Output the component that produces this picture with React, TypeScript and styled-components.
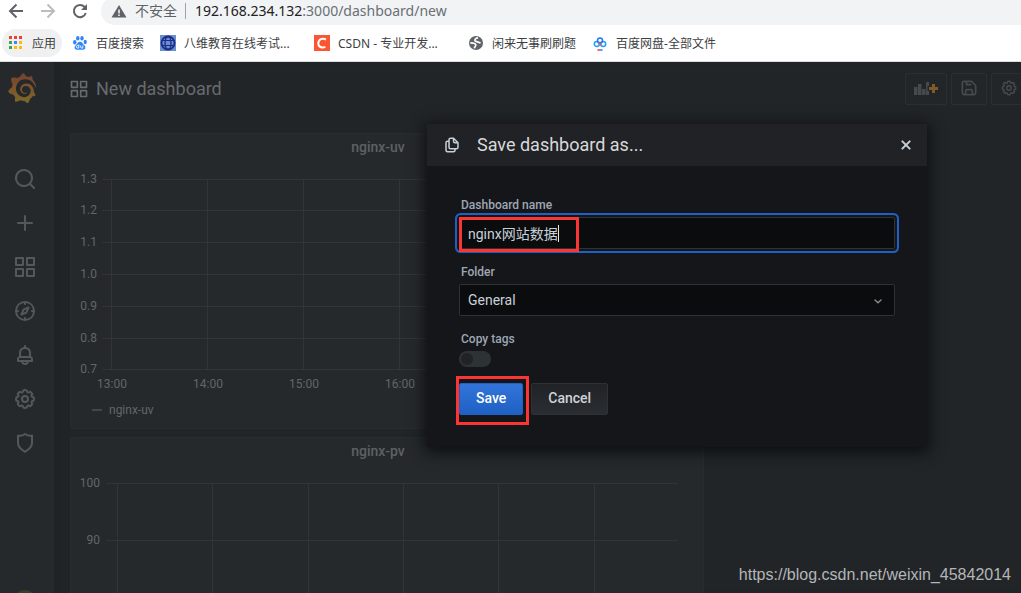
import React, { useState } from "react";
import styled, { createGlobalStyle } from "styled-components";
import { SiGrafana } from "react-icons/si";

const GlobalStyle = createGlobalStyle`
  * { box-sizing: border-box; }
  body {
    margin: 0;
    overflow: hidden;
    background: #212528;
    font-family: Roboto, "Noto Sans CJK SC", sans-serif;
  }
  button, input, select { font-family: inherit; }
`;

const Page = styled.div`
  display: flex;
  flex-direction: column;
  height: 100vh;
`;

/* Browser chrome */

const Chrome = styled.header`
  flex: none;
  background: #fff;
  border-bottom: 1px solid #dadce0;
  font-family: "Noto Sans", "Noto Sans CJK SC", sans-serif;
  overflow: hidden;
`;

const AddressRow = styled.div`
  display: flex;
  align-items: center;
  height: 28px;
  margin-top: -3px;
`;

const ChromeButtons = styled.div`
  display: flex;
  gap: 14px;
  padding: 0 12px 0 7px;
`;

const ChromeButton = styled.button`
  display: flex;
  padding: 0;
  border: 0;
  background: none;
  color: ${(p: { $faded?: boolean }) => (p.$faded ? "#babcbe" : "#5f6368")};
`;

const AddressBar = styled.div`
  display: flex;
  flex: 1;
  align-items: center;
  height: 28px;
  margin-right: -20px;
  padding: 0 0 1px 10px;
  border-radius: 14px;
  background: #f1f3f4;
  color: #5f6368;
  font-size: 14px;
  white-space: nowrap;
`;

const Insecure = styled.span`
  margin-left: 8px;
  padding-right: 8px;
  border-right: 1px solid #a0a3a7;
  line-height: 16px;
`;

const Url = styled.div`
  margin-left: 9px;
  font-size: 14px;
  line-height: 20px;
  color: #6b6f74;
  outline: 0;
  strong { font-weight: 400; color: #202124; }
`;

const Bookmarks = styled.nav`
  display: flex;
  align-items: center;
  gap: 16px;
  height: 36px;
  padding-left: 2px;
`;

const Bookmark = styled.a`
  display: flex;
  align-items: center;
  gap: 8px;
  height: 28px;
  color: #3c4043;
  font-size: 12px;
  line-height: 16px;
  text-decoration: none;
  white-space: nowrap;
  svg { flex: none; }
`;

const AppsBookmark = styled(Bookmark)`
  margin-right: -6px;
  padding: 0 6px;
  border-radius: 14px;
  background: #f0f0f0;
`;

const BookmarkText = styled.span<{ $long?: boolean }>`
  width: ${(p) => (p.$long ? "114px" : "auto")};
  padding-top: 2px;
`;

/* Dashboard */

const Shell = styled.div`
  display: flex;
  flex: 1;
  min-height: 0;
  overflow: hidden;
`;

const Sidebar = styled.nav`
  display: flex;
  flex: none;
  flex-direction: column;
  align-items: center;
  width: 54px;
  padding: 11px 4px 0 0;
  background: #25292c;
`;

const LogoLink = styled.a`
  display: flex;
  margin: 0 6px 64px 0;
`;

const NavLinks = styled.div`
  display: flex;
  flex-direction: column;
  gap: 20px;
`;

const NavLink = styled.a`
  display: flex;
  color: #53585d;
`;

const Avatar = styled.div`
  flex: none;
  width: 24px;
  height: 24px;
  margin: auto 0 -21px;
  border-radius: 50%;
  background: #344029;
`;

const Main = styled.main`
  flex: 1;
  min-width: 0;
  padding: 11px 0 0 16px;
  background: #212528;
  box-shadow: inset 12px 0 12px -10px #1e2225;
`;

const Header = styled.div`
  display: flex;
  align-items: center;
  margin: 0 -6px 28px 0;
`;

const Title = styled.h1`
  display: flex;
  flex: 1;
  align-items: center;
  gap: 7px;
  margin: 0 0 0 -1px;
  color: #676b6f;
  font-size: 18px;
  font-weight: 400;
  line-height: 24px;
`;

const Tools = styled.div`
  display: flex;
  gap: 4px;
`;

const ToolButton = styled.button<{ $wide?: boolean }>`
  display: flex;
  align-items: center;
  justify-content: center;
  width: ${(p) => (p.$wide ? "42px" : "36px")};
  height: 32px;
  padding: 0 0 2px;
  border: 1px solid #2b2f32;
  border-radius: 2px;
  background: #222629;
  color: #46494d;
`;

const Grid = styled.div`
  display: grid;
  grid-template-columns: 2fr 1fr;
  gap: 8px 0;
`;

const Panel = styled.section`
  grid-column: 1;
  height: 296px;
  padding-top: 3px;
  border: 1px solid #292c30;
  border-radius: 3px;
  background: #25292c;
`;

const PanelTitle = styled.h2`
  margin: 0;
  padding-right: 18px;
  color: #5d6165;
  font-size: 14px;
  font-weight: 500;
  line-height: 20px;
  text-align: center;
`;

const Plot = styled.svg`
  display: block;
  width: 100%;
  height: 245px;
  fill: #62666a;
  font-size: 12px;
  line { stroke: #313538; }
`;

const Legend = styled.div`
  display: flex;
  align-items: center;
  gap: 7px;
  padding-left: 21px;
  color: #62666a;
  font-size: 12px;
  line-height: 16px;
`;

const LegendMark = styled.span`
  width: 10px;
  height: 2px;
  background: #3c4c40;
`;

/* Modal */

const Modal = styled.div`
  position: absolute;
  top: 124px;
  right: 94px;
  width: 500px;
  background: #141619;
  box-shadow: 0 3px 14px 2px #0c0e0f;
`;

const ModalHeader = styled.div`
  display: flex;
  align-items: center;
  height: 42px;
  padding: 0 13px 0 16px;
  background: #202226;
  color: #c7d0d9;
`;

const ModalTitle = styled.h2`
  flex: 1;
  margin: 0 0 0 16px;
  color: #d8d9da;
  font-size: 18px;
  font-weight: 400;
  line-height: 24px;
`;

const CloseButton = styled.button`
  display: flex;
  padding: 0;
  border: 0;
  background: none;
  color: #c7d0d9;
`;

const Form = styled.form`
  display: flex;
  flex-direction: column;
  gap: 16px;
  padding: 32px;
`;

const Field = styled.div`
  position: relative;
`;

const Label = styled.label`
  display: block;
  margin-bottom: 4px;
  padding-left: 2px;
  color: #9fa7b3;
  font-size: 12px;
  font-weight: 500;
  line-height: 15px;
`;

const TextInput = styled.input`
  display: block;
  width: 100%;
  height: 32px;
  padding: 0 8px;
  border: 1px solid #2c3235;
  border-radius: 2px;
  outline: 0;
  background: #0b0c0e;
  box-shadow: 0 0 0 2px #141619, 0 0 0 4px #1f60c4;
  color: #c7d0d9;
  font-size: 14px;
`;

const Caret = styled.span`
  position: absolute;
  top: 27px;
  left: 99px;
  width: 1px;
  height: 17px;
  background: #e4e8ec;
`;

const Select = styled.select`
  display: block;
  width: 100%;
  height: 32px;
  padding: 0 8px;
  border: 1px solid #2c3235;
  border-radius: 2px;
  appearance: none;
  background: #0b0c0e;
  color: #c7d0d9;
  font-size: 14px;
`;

const Chevron = styled.svg`
  position: absolute;
  right: 9px;
  bottom: 7px;
  pointer-events: none;
`;

const Switch = styled.input`
  display: block;
  width: 32px;
  height: 16px;
  margin: 0;
  border-radius: 8px;
  appearance: none;
  background: #2c3235;
  &::before {
    content: "";
    display: block;
    width: 12px;
    height: 12px;
    margin: 2px;
    border-radius: 50%;
    background: #202226;
  }
`;

const Actions = styled.div`
  position: relative;
  display: flex;
  gap: 8px;
`;

const ActionButton = styled.button<{ $primary?: boolean }>`
  height: 32px;
  padding: 0 16px 2px;
  border: 1px solid ${(p) => (p.$primary ? "#1f60c4" : "#2c3235")};
  border-radius: 2px;
  background: ${(p) =>
    p.$primary
      ? "linear-gradient(180deg, #3274d9, #1f60c4)"
      : "linear-gradient(180deg, #202226, #2a2e32)"};
  color: ${(p) => (p.$primary ? "#fff" : "#d0d3d8")};
  font-size: 14px;
  font-weight: 500;
`;

const Highlight = styled.span<{ $around: "name" | "save" }>`
  position: absolute;
  top: ${(p) => (p.$around === "name" ? "19px" : "-7px")};
  left: ${(p) => (p.$around === "name" ? "0" : "-3px")};
  width: ${(p) => (p.$around === "name" ? "120px" : "73px")};
  height: ${(p) => (p.$around === "name" ? "35px" : "49px")};
  border: 3px solid #fa3534;
  pointer-events: none;
`;

const Watermark = styled.div`
  position: absolute;
  right: 10px;
  bottom: 8px;
  color: #b4b6b7;
  font-family: "Liberation Sans", sans-serif;
  font-size: 16px;
  line-height: 20px;
`;

const gearPath = (() => {
  const point = (turn: number, radius: number) => {
    const angle = (turn * Math.PI) / 180;
    return `${(12 + radius * Math.sin(angle)).toFixed(2)} ${(12 - radius * Math.cos(angle)).toFixed(2)}`;
  };
  let d = `M${point(-11, 8.8)}`;
  for (let i = 0; i < 8; i++) {
    const turn = i * 45;
    d += `Q${point(turn, 9.4)} ${point(turn + 11, 8.8)}`;
    d += `Q${point(turn + 22.5, 5.6)} ${point(turn + 34, 8.8)}`;
  }
  return `${d}Z`;
})();

const glyphs = {
  search:
    "M21.71,20.29,18,16.61A9,9,0,1,0,16.61,18l3.68,3.68a1,1,0,0,0,1.42,0A1,1,0,0,0,21.71,20.29ZM11,18a7,7,0,1,1,7-7A7,7,0,0,1,11,18Z",
  plus: "M19,11H13V5a1,1,0,0,0-2,0v6H5a1,1,0,0,0,0,2h6v6a1,1,0,0,0,2,0V13h6a1,1,0,0,0,0-2Z",
  apps: "M10,13H3a1,1,0,0,0-1,1v7a1,1,0,0,0,1,1h7a1,1,0,0,0,1-1V14A1,1,0,0,0,10,13ZM9,20H4V15H9ZM21,2H14a1,1,0,0,0-1,1v7a1,1,0,0,0,1,1h7a1,1,0,0,0,1-1V3A1,1,0,0,0,21,2ZM20,9H15V4h5Zm1,4H14a1,1,0,0,0-1,1v7a1,1,0,0,0,1,1h7a1,1,0,0,0,1-1V14A1,1,0,0,0,21,13Zm-1,7H15V15h5ZM10,2H3A1,1,0,0,0,2,3v7a1,1,0,0,0,1,1h7a1,1,0,0,0,1-1V3A1,1,0,0,0,10,2ZM9,9H4V4H9Z",
  compass:
    "M12,2A10,10,0,1,0,22,12,10,10,0,0,0,12,2Zm1,17.93V19a1,1,0,0,0-2,0v.93A8,8,0,0,1,4.07,13H5a1,1,0,0,0,0-2H4.07A8,8,0,0,1,11,4.07V5a1,1,0,0,0,2,0V4.07A8,8,0,0,1,19.93,11H19a1,1,0,0,0,0,2h.93A8,8,0,0,1,13,19.93ZM15.14,7.55l-5,2.12a1,1,0,0,0-.52.52l-2.12,5a1,1,0,0,0,.21,1.1,1,1,0,0,0,.7.29.93.93,0,0,0,.4-.08l5-2.12a1,1,0,0,0,.52-.52l2.12-5a1,1,0,0,0-1.31-1.31Zm-2.49,5.1-2.28,1,1-2.28,2.28-1Z",
  bell: "M18,13.18V10a6,6,0,0,0-5-5.91V3a1,1,0,0,0-2,0V4.09A6,6,0,0,0,6,10v3.18A3,3,0,0,0,4,16v2a1,1,0,0,0,1,1H8.14a4,4,0,0,0,7.72,0H19a1,1,0,0,0,1-1V16A3,3,0,0,0,18,13.18ZM8,10a4,4,0,0,1,8,0v3H8Zm4,10a2,2,0,0,1-1.72-1h3.44A2,2,0,0,1,12,20Zm6-3H6V16a1,1,0,0,1,1-1H17a1,1,0,0,1,1,1Z",
  copy: "M21,8.94a1.31,1.31,0,0,0-.06-.27l0-.09a1.07,1.07,0,0,0-.19-.28h0l-6-6h0a1.07,1.07,0,0,0-.28-.19.32.32,0,0,0-.09,0A.88.88,0,0,0,14.05,2H10A3,3,0,0,0,7,5V6H6A3,3,0,0,0,3,9V19a3,3,0,0,0,3,3h8a3,3,0,0,0,3-3V18h1a3,3,0,0,0,3-3V9S21,9,21,8.94ZM15,5.41,17.59,8H16a1,1,0,0,1-1-1ZM15,19a1,1,0,0,1-1,1H6a1,1,0,0,1-1-1V9A1,1,0,0,1,6,8H7v7a3,3,0,0,0,3,3h5Zm4-4a1,1,0,0,1-1,1H10a1,1,0,0,1-1-1V5a1,1,0,0,1,1-1h3V7a3,3,0,0,0,3,3h3Z",
};

const strokes = {
  shield:
    "M12 3C9.600 4.800 7.200 5.200 5 4.600V12c0 3.600 2.600 6.200 7 8.800 4.400-2.600 7-5.200 7-8.800V4.600C16.800 5.200 14.400 4.800 12 3Z",
  save: "M6 4H15L20 9V17A3 3 0 0 1 17 20H7A3 3 0 0 1 4 17V6A2 2 0 0 1 6 4ZM9 4.500V8H14M8 20V15.500A1.500 1.500 0 0 1 9.500 14H14.500A1.500 1.500 0 0 1 16 15.500V20",
  close: "M6.500 6.500L17.500 17.500M17.500 6.500L6.500 17.500",
};

const Glyph = ({ name, size = 24 }: { name: keyof typeof glyphs; size?: number }) => (
  <svg width={size} height={size} viewBox="0 0 24 24" fill="currentColor" aria-hidden="true">
    <path d={glyphs[name]} />
  </svg>
);

const Stroke = ({ name, size = 24, weight = 2 }: { name: keyof typeof strokes; size?: number; weight?: number }) => (
  <svg width={size} height={size} viewBox="0 0 24 24" fill="none" stroke="currentColor" strokeWidth={weight} strokeLinejoin="round" strokeLinecap="round" aria-hidden="true">
    <path d={strokes[name]} />
  </svg>
);

const Gear = ({ size = 24 }: { size?: number }) => (
  <svg width={size} height={size} viewBox="0 0 24 24" fill="none" stroke="currentColor" strokeWidth={2} strokeLinejoin="round" aria-hidden="true">
    <path d={gearPath} />
    <circle cx="12" cy="12" r="3" />
  </svg>
);

const navItems = [
  { label: "Search", icon: <Glyph name="search" /> },
  { label: "Create", icon: <Glyph name="plus" /> },
  { label: "Dashboards", icon: <Glyph name="apps" /> },
  { label: "Explore", icon: <Glyph name="compass" /> },
  { label: "Alerting", icon: <Glyph name="bell" /> },
  { label: "Configuration", icon: <Gear /> },
  { label: "Server Admin", icon: <Stroke name="shield" /> },
];

const AppsIcon = () => (
  <svg width="16" height="16" viewBox="0 0 16 16">
    {["#ea4335", "#ea4335", "#ea4335", "#34a853", "#4285f4", "#fbbc05", "#34a853", "#fbbc05", "#fbbc05"].map((c, i) => (
      <rect key={i} x={1 + (i % 3) * 5} y={1 + Math.floor(i / 3) * 5} width="3" height="3" fill={c} />
    ))}
  </svg>
);

const PawIcon = () => (
  <svg width="16" height="16" viewBox="0 0 16 16" fill="#2f86f6">
    <ellipse cx="2.800" cy="7.200" rx="1.700" ry="2.200" />
    <ellipse cx="5.800" cy="3.300" rx="1.700" ry="2.300" />
    <ellipse cx="10" cy="3.300" rx="1.700" ry="2.300" />
    <ellipse cx="13.200" cy="7" rx="1.600" ry="2.200" />
    <path d="M8 6.800C5.800 6.800 5.300 9 3.700 10.300 2 11.700 2.300 14.800 5 14.800 6.500 14.800 9.500 14.800 11 14.800 13.700 14.800 14 11.700 12.300 10.300 10.700 9 10.200 6.800 8 6.800Z" />
    <path d="M6.800 9.500V13H5.500A1.100 1.100 0 0 1 5.500 10.600H6.800M8.700 10.500V12.300Q8.700 13 9.400 13H10.800V10.500" fill="none" stroke="#fff" strokeWidth="0.9" />
  </svg>
);

const GlobeIcon = () => (
  <svg width="16" height="16" viewBox="0 0 16 16">
    <rect width="16" height="16" fill="#6493c8" />
    <g fill="none" stroke="#23278f">
      <circle cx="8" cy="8" r="6.500" strokeWidth="1.800" />
      <ellipse cx="8" cy="8" rx="3" ry="6.500" strokeWidth="1.300" />
      <path d="M2 5.500H14M2 10.500H14" strokeWidth="1" />
    </g>
  </svg>
);

const CsdnIcon = () => (
  <svg width="16" height="16" viewBox="0 0 16 16">
    <rect width="16" height="16" fill="#fc5531" />
    <path d="M12 4.500C8.500 2.600 4.500 4 4.300 8.200 4.200 12 8 13.300 11.400 11.800" fill="none" stroke="#fff" strokeWidth="2" />
  </svg>
);

const WorldIcon = () => (
  <svg width="16" height="16" viewBox="0 0 16 16">
    <circle cx="8" cy="8" r="7" fill="#5f6368" />
    <path d="M10 2.600C7.500 3.300 6.500 4.500 7 5.800 8 7.300 10.800 6.300 12.500 8.300M2.300 7.800C4.500 7.800 7.500 8 7.800 9.800 8 11.300 6.500 11.500 6.400 13.400" fill="none" stroke="#fff" strokeWidth="1.700" />
  </svg>
);

const DiskIcon = () => (
  <svg width="16" height="16" viewBox="0 0 16 16" fill="none" strokeWidth="1.500">
    <circle cx="4.800" cy="9" r="2.500" stroke="#19a5f5" />
    <circle cx="11.200" cy="9" r="2.500" stroke="#19a5f5" />
    <circle cx="8" cy="5.500" r="2.500" stroke="#2979f2" />
    <path d="M6.500 7.500L9.500 10.500" stroke="#f0506a" />
    <path d="M5.500 15H8" stroke="#f0304a" />
    <path d="M8 15H10.500" stroke="#2979f2" />
  </svg>
);

const bookmarks = [
  { text: "百度搜索", icon: <PawIcon /> },
  { text: "八维教育在线考试...", icon: <GlobeIcon />, long: true },
  { text: "CSDN - 专业开发...", icon: <CsdnIcon />, long: true },
  { text: "闲来无事刷刷题", icon: <WorldIcon /> },
  { text: "百度网盘-全部文件", icon: <DiskIcon /> },
];

type PlotProps = {
  rows: { label: string; y: number }[];
  columns: number[];
  left: number;
  right: number;
  bottom: number;
  labelRight: number;
  times?: string[];
};

const Graph = ({ rows, columns, left, right, bottom, labelRight, times = [] }: PlotProps) => (
  <Plot shapeRendering="crispEdges">
    {rows.map((row) => (
      <g key={row.label}>
        <line x1={left} x2={right} y1={row.y + 0.5} y2={row.y + 0.5} />
        <text x={labelRight} y={row.y + 4} textAnchor="end">{row.label}</text>
      </g>
    ))}
    {columns.map((x) => (
      <line key={x} x1={x + 0.5} x2={x + 0.5} y1={rows[0].y} y2={bottom} />
    ))}
    {times.map((time, i) => (
      <text key={time} x={columns[i] + 1} y={bottom + 19} textAnchor="middle">{time}</text>
    ))}
  </Plot>
);

export default function App() {
  const [name, setName] = useState("nginx网站数据");
  return (
    <Page>
      <GlobalStyle />
      <Chrome>
        <AddressRow>
          <ChromeButtons>
            <ChromeButton aria-label="Back">
              <svg width="18" height="18" viewBox="0 0 18 18" fill="none" stroke="currentColor" strokeWidth="2"><path d="M16 9H3M9.500 2.500L3 9L9.500 15.500" /></svg>
            </ChromeButton>
            <ChromeButton aria-label="Forward" $faded>
              <svg width="18" height="18" viewBox="0 0 18 18" fill="none" stroke="currentColor" strokeWidth="2"><path d="M2 9H15M8.500 2.500L15 9L8.500 15.500" /></svg>
            </ChromeButton>
            <ChromeButton aria-label="Reload">
              <svg width="18" height="18" viewBox="0 0 18 18" fill="none" stroke="currentColor" strokeWidth="2"><path d="M14.800 11A6.100 6.100 0 1 1 13.600 5L15 6.400" /><path d="M16 2V8H10Z" fill="currentColor" stroke="none" /></svg>
            </ChromeButton>
          </ChromeButtons>
          <AddressBar>
            <svg width="16" height="16" viewBox="0 0 16 16" fill="#5f6368"><path fillRule="evenodd" d="M8 2L15.500 14.500H0.500ZM7.200 6.500V10.500H8.800V6.500ZM7.200 11.500V13H8.800V11.500Z" /></svg>
            <Insecure>不安全</Insecure>
            <Url role="textbox" aria-label="Address" contentEditable suppressContentEditableWarning spellCheck={false}>
              <strong>192.168.234.132</strong>:3000/dashboard/new
            </Url>
          </AddressBar>
        </AddressRow>
        <Bookmarks>
          <AppsBookmark href="#apps">
            <AppsIcon />
            <BookmarkText>应用</BookmarkText>
          </AppsBookmark>
          {bookmarks.map((b) => (
            <Bookmark key={b.text} href="#bookmark">
              {b.icon}
              <BookmarkText $long={b.long}>{b.text}</BookmarkText>
            </Bookmark>
          ))}
        </Bookmarks>
      </Chrome>

      <Shell>
        <Sidebar>
          <LogoLink href="#home" aria-label="Home">
            <svg width="0" height="0" aria-hidden="true">
              <linearGradient id="flame" x1="0" y1="0" x2="0" y2="1">
                <stop offset="0" stopColor="#75402f" />
                <stop offset="0.5" stopColor="#80532c" />
                <stop offset="1" stopColor="#786a26" />
              </linearGradient>
            </svg>
            <SiGrafana size={30} fill="url(#flame)" />
          </LogoLink>
          <NavLinks>
            {navItems.map((item) => (
              <NavLink key={item.label} href="#nav" aria-label={item.label}>{item.icon}</NavLink>
            ))}
          </NavLinks>
          <Avatar />
        </Sidebar>
        <Main>
          <Header>
            <Title><Glyph name="apps" size={20} />New dashboard</Title>
            <Tools>
              <ToolButton $wide aria-label="Add panel">
                <svg width="26" height="20" viewBox="0 0 26 20" fill="currentColor">
                  <path d="M1 9H4.500V17H1ZM5 6H8.500V17H5ZM9 11H12.500V17H9ZM13 4H16V8H14.500V13H16V17H13Z" />
                  <path d="M19 6H22V9H25V12H22V15H19V12H16V9H19Z" fill="#80592a" />
                </svg>
              </ToolButton>
              <ToolButton aria-label="Save dashboard"><Stroke name="save" size={20} /></ToolButton>
              <ToolButton aria-label="Dashboard settings"><Gear size={18} /></ToolButton>
            </Tools>
          </Header>
          <Grid>
            <Panel>
              <PanelTitle>nginx-uv</PanelTitle>
              <Graph
                rows={["1.3", "1.2", "1.1", "1.0", "0.9", "0.8", "0.7"].map((label, i) => ({ label, y: [22, 53, 85, 117, 149, 181, 212][i] }))}
                columns={[40, 136, 232, 328, 424, 520]}
                times={["13:00", "14:00", "15:00", "16:00", "17:00", "18:00"]}
                left={31}
                right={607}
                bottom={212}
                labelRight={26}
              />
              <Legend><LegendMark />nginx-uv</Legend>
            </Panel>
            <Panel>
              <PanelTitle>nginx-pv</PanelTitle>
              <Graph
                rows={[{ label: "100", y: 22 }, { label: "90", y: 79 }]}
                columns={[46, 141, 237, 332, 427, 523]}
                left={35}
                right={607}
                bottom={232}
                labelRight={29}
              />
            </Panel>
          </Grid>
        </Main>
      </Shell>

      <Modal role="dialog" aria-labelledby="modal-title">
        <ModalHeader>
          <Glyph name="copy" size={18} />
          <ModalTitle id="modal-title">Save dashboard as...</ModalTitle>
          <CloseButton aria-label="Close"><Stroke name="close" size={16} weight={3} /></CloseButton>
        </ModalHeader>
        <Form onSubmit={(e) => e.preventDefault()}>
          <Field>
            <Label htmlFor="name">Dashboard name</Label>
            <TextInput id="name" value={name} onChange={(e) => setName(e.target.value)} />
            <Caret />
            <Highlight $around="name" />
          </Field>
          <Field>
            <Label htmlFor="folder">Folder</Label>
            <Select id="folder"><option>General</option></Select>
            <Chevron width="16" height="16" viewBox="0 0 16 16" fill="none" stroke="#85898e" strokeWidth="1.500" strokeLinecap="round"><path d="M5 7L8 9.700L11 7" /></Chevron>
          </Field>
          <Field>
            <Label htmlFor="tags">Copy tags</Label>
            <Switch id="tags" type="checkbox" />
          </Field>
          <Actions>
            <ActionButton $primary type="submit">Save</ActionButton>
            <ActionButton type="button">Cancel</ActionButton>
            <Highlight $around="save" />
          </Actions>
        </Form>
      </Modal>
      <Watermark>https://blog.csdn.net/weixin_45842014</Watermark>
    </Page>
  );
}
